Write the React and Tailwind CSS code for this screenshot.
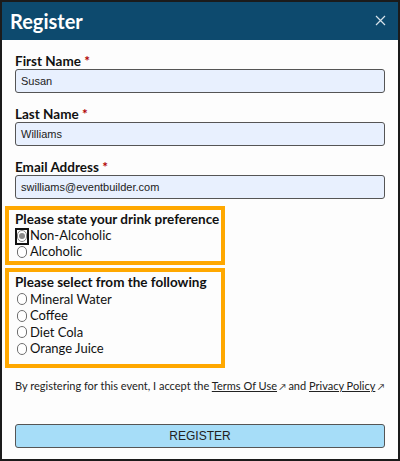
import React from 'react';

const seg = { fontFamily: 'Lato, "Open Sans", sans-serif' };
const arial = { fontFamily: '"Liberation Sans", Arial, sans-serif' };

const Field = ({ label, value }) => (
  <div className="mb-[13px]">
    <div className="h-[16px] text-[13.5px] leading-[16px] font-bold text-[#111] whitespace-nowrap" style={seg}>
      {label} <span className="text-[#b00000]">*</span>
    </div>
    <div
      className="h-[24px] flex items-center px-[5px] border border-[#555] rounded-[3px] bg-[#e8f0fe] text-[11px] text-[#222]"
      style={arial}
    >
      {value}
    </div>
  </div>
);

const Radio = ({ label, checked, focused, h = 'h-[16px]' }) => (
  <div className={`flex items-center ${h} text-[13px] text-[#111] whitespace-nowrap`} style={seg}>
    <span
      className={`flex items-center justify-center w-[14px] h-[17px] ${
        focused ? 'border-2 border-[#111]' : 'border-2 border-transparent'
      }`}
    >
      <span
        className={`flex items-center justify-center w-[12px] h-[12px] rounded-full border bg-white ${
          checked ? 'border-[#8a8a8a]' : 'border-[#6f6f6f]'
        }`}
      >
        {checked && <span className="w-[6px] h-[6px] rounded-full bg-[#8a8a8a]" />}
      </span>
    </span>
    <span className="ml-[1px]">{label}</span>
  </div>
);

export default function App() {
  return (
    <div className="w-[400px] h-[461px] border-2 border-[#1b1b1b] bg-[#fdfdfd] flex flex-col overflow-hidden">
      <div className="h-[38px] shrink-0 bg-[#0d4a6e] flex items-center justify-between pl-[8px] pr-[12px]">
        <span className="text-white text-[20px] font-bold" style={seg}>Register</span>
        <svg width="11" height="11" viewBox="0 0 11 11" className="mt-[-2px]">
          <path d="M1 1L10 10M10 1L1 10" stroke="#d6e2ea" strokeWidth="1.2" />
        </svg>
      </div>

      <div className="px-[13px] pt-[13px]">
        <Field label="First Name" value="Susan" />
        <Field label="Last Name" value="Williams" />
        <Field label="Email Address" value="swilliams@eventbuilder.com" />
      </div>

      <div className="ml-[3px] mt-[-6px] w-[220px] border-4 border-[#ffa800] pl-[6px] pt-[1px] pb-[1px]">
        <div className="h-[17px] leading-[17px] text-[13.5px] font-bold text-[#111] whitespace-nowrap" style={seg}>
          Please state your drink preference
        </div>
        <Radio label="Non-Alcoholic" checked focused />
        <Radio label="Alcoholic" />
      </div>

      <div className="ml-[3px] mt-[3px] w-[220px] border-4 border-[#ffa800] pl-[6px] pt-[2px] pb-[7px]">
        <div className="h-[17px] leading-[17px] text-[13.5px] font-bold text-[#111] whitespace-nowrap" style={seg}>
          Please select from the following
        </div>
        <Radio label="Mineral Water" h="h-[16.5px]" />
        <Radio label="Coffee" h="h-[16.5px]" />
        <Radio label="Diet Cola" h="h-[16.5px]" />
        <Radio label="Orange Juice" h="h-[16.5px]" />
      </div>

      <div className="px-[13px] mt-[10px] h-[16px] leading-[16px] text-[11px] text-[#222] whitespace-nowrap" style={seg}>
        By registering for this event, I accept the <span className="underline">Terms Of Use</span>
        <span className="text-[9px]"> ↗ </span>and <span className="underline">Privacy Policy</span>
        <span className="text-[9px]"> ↗</span>
      </div>

      <div className="px-[13px] mt-[30px]">
        <div
          className="h-[24px] flex items-center justify-center border border-[#555] rounded-[3px] bg-[#a6ddf8] text-[12px] text-[#222]"
          style={arial}
        >
          REGISTER
        </div>
      </div>
    </div>
  );
}
